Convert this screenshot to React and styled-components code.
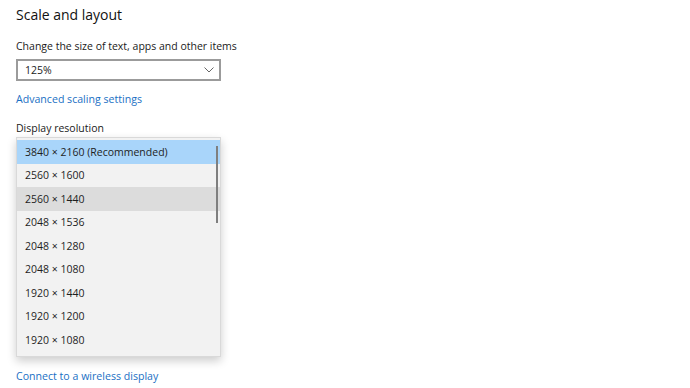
import React from 'react'
import styled, { createGlobalStyle } from 'styled-components'

const Global = createGlobalStyle`
  html, body {
    margin: 0;
    background: #ffffff;
  }
  body {
    font-family: "Open Sans", "Noto Sans", sans-serif;
    color: #1f1f1f;
  }
`

const Page = styled.div`
  width: 690px;
  height: 388px;
  overflow: hidden;
  padding: 5px 16px 0;
  box-sizing: border-box;
  display: flex;
  flex-direction: column;
  align-items: flex-start;
`

const Heading = styled.h2`
  margin: 0;
  font-size: 14px;
  font-weight: 400;
  line-height: 20px;
  color: #111;
`

const Label = styled.div`
  margin-top: ${props => props.$top || 0}px;
  font-size: 10.5px;
  line-height: 15px;
  color: #1a1a1a;
`

const Combo = styled.div`
  margin-top: 5.5px;
  width: 205px;
  height: 22px;
  box-sizing: border-box;
  border: 2px solid #9b9b9b;
  display: flex;
  align-items: center;
  justify-content: space-between;
  padding: 0 5px 0 7px;
  font-size: 10.5px;
  color: #222;
`

const Link = styled.a`
  margin-top: ${props => props.$top || 0}px;
  font-size: 10.6px;
  line-height: 15px;
  color: #1a70c4;
  text-decoration: none;
`

const Popup = styled.div`
  margin-top: 1.5px;
  width: 205px;
  box-sizing: border-box;
  background: #f2f2f2;
  border: 1px solid #d9d9d9;
  box-shadow: 0 4px 9px rgba(0, 0, 0, 0.2);
  padding: 2px 0 4.5px;
  position: relative;
`

const Item = styled.div`
  height: 23.5px;
  display: flex;
  align-items: center;
  padding-left: 8px;
  font-size: 10.5px;
  color: #1e1e1e;
  background: ${props =>
    props.$selected ? '#a9d5fa' : props.$hover ? '#dcdcdc' : 'transparent'};
`

const Scroll = styled.div`
  position: absolute;
  right: 2px;
  top: 8px;
  width: 2px;
  height: 77px;
  background: #7f7f7f;
`

const Chevron = () => (
  <svg width="10" height="6" viewBox="0 0 10 6">
    <path d="M0.5 0.5 L5 5 L9.5 0.5" fill="none" stroke="#666" strokeWidth="1" />
  </svg>
)

const resolutions = [
  '3840 × 2160 (Recommended)',
  '2560 × 1600',
  '2560 × 1440',
  '2048 × 1536',
  '2048 × 1280',
  '2048 × 1080',
  '1920 × 1440',
  '1920 × 1200',
  '1920 × 1080',
]

export default function App() {
  return (
    <Page>
      <Global />
      <Heading>Scale and layout</Heading>
      <Label $top={13.5}>Change the size of text, apps and other items</Label>
      <Combo>
        <span>125%</span>
        <Chevron />
      </Combo>
      <Link $top={10.5}>Advanced scaling settings</Link>
      <Label $top={14}>Display resolution</Label>
      <Popup>
        {resolutions.map((r, i) => (
          <Item key={r} $selected={i === 0} $hover={i === 2}>
            {r}
          </Item>
        ))}
        <Scroll />
      </Popup>
      <Link $top={11.5}>Connect to a wireless display</Link>
    </Page>
  )
}
